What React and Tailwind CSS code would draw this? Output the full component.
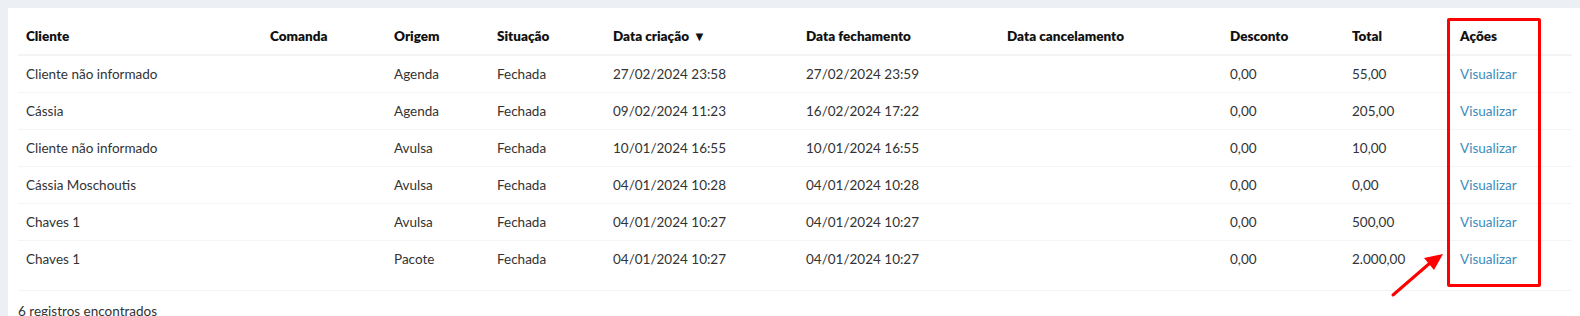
import React from "react";

const columns = [
  { label: "Cliente", w: "w-[244px]" },
  { label: "Comanda", w: "w-[124px]" },
  { label: "Origem", w: "w-[103px]" },
  { label: "Situação", w: "w-[116px]" },
  { label: "Data criação", w: "w-[193px]", sort: true },
  { label: "Data fechamento", w: "w-[201px]" },
  { label: "Data cancelamento", w: "w-[223px]" },
  { label: "Desconto", w: "w-[122px]" },
  { label: "Total", w: "w-[108px]" },
  { label: "Ações", w: "w-[120px]" },
];

const rows = [
  ["Cliente não informado", "", "Agenda", "Fechada", "27/02/2024 23:58", "27/02/2024 23:59", "", "0,00", "55,00"],
  ["Cássia", "", "Agenda", "Fechada", "09/02/2024 11:23", "16/02/2024 17:22", "", "0,00", "205,00"],
  ["Cliente não informado", "", "Avulsa", "Fechada", "10/01/2024 16:55", "10/01/2024 16:55", "", "0,00", "10,00"],
  ["Cássia Moschoutis", "", "Avulsa", "Fechada", "04/01/2024 10:28", "04/01/2024 10:28", "", "0,00", "0,00"],
  ["Chaves 1", "", "Avulsa", "Fechada", "04/01/2024 10:27", "04/01/2024 10:27", "", "0,00", "500,00"],
  ["Chaves 1", "", "Pacote", "Fechada", "04/01/2024 10:27", "04/01/2024 10:27", "", "0,00", "2.000,00"],
];

export default function App() {
  return (
    <div className="min-h-[316px] bg-[#ecf0f5] pt-2 pl-2 overflow-hidden font-['Lato','Liberation_Sans',sans-serif] text-[13.5px] text-[#333]">
      <div className="relative w-[1574px] bg-white p-[10px] pb-0">
        <table className="w-[1554px] table-fixed border-collapse">
          <thead>
            <tr className="border-b-2 border-[#f4f4f4]">
              {columns.map((c) => (
                <th
                  key={c.label}
                  className={`${c.w} px-2 py-2 text-left font-extrabold leading-5 text-[#111]`}
                >
                  {c.label}
                  {c.sort && <span className="ml-1 text-[13px]">▼</span>}
                </th>
              ))}
            </tr>
          </thead>
          <tbody>
            {rows.map((r, i) => (
              <tr key={i} className={i > 0 ? "border-t border-[#f4f4f4]" : ""}>
                {r.map((cell, j) => (
                  <td key={j} className="px-2 py-2 leading-5 whitespace-nowrap">
                    {cell}
                  </td>
                ))}
                <td className="px-2 py-2 leading-5">
                  <a href="#" className="text-[#3c8dbc]">
                    Visualizar
                  </a>
                </td>
              </tr>
            ))}
          </tbody>
        </table>
        <div className="h-[14px] border-b border-[#f4f4f4]" />
        <div className="py-[10px] leading-5">6 registros encontrados</div>

        <div className="absolute left-[1439px] top-[10px] w-[94px] h-[269px] border-[3px] border-[#ff0000] rounded-[2px] pointer-events-none" />
        <svg
          className="absolute left-[1380px] top-[240px] pointer-events-none"
          width="62"
          height="52"
          viewBox="0 0 62 52"
        >
          <line x1="5" y1="47" x2="42" y2="15" stroke="#ff0000" strokeWidth="3" strokeLinecap="round" />
          <polygon points="55,6 36,10 46,22" fill="#ff0000" />
        </svg>
      </div>
    </div>
  );
}
